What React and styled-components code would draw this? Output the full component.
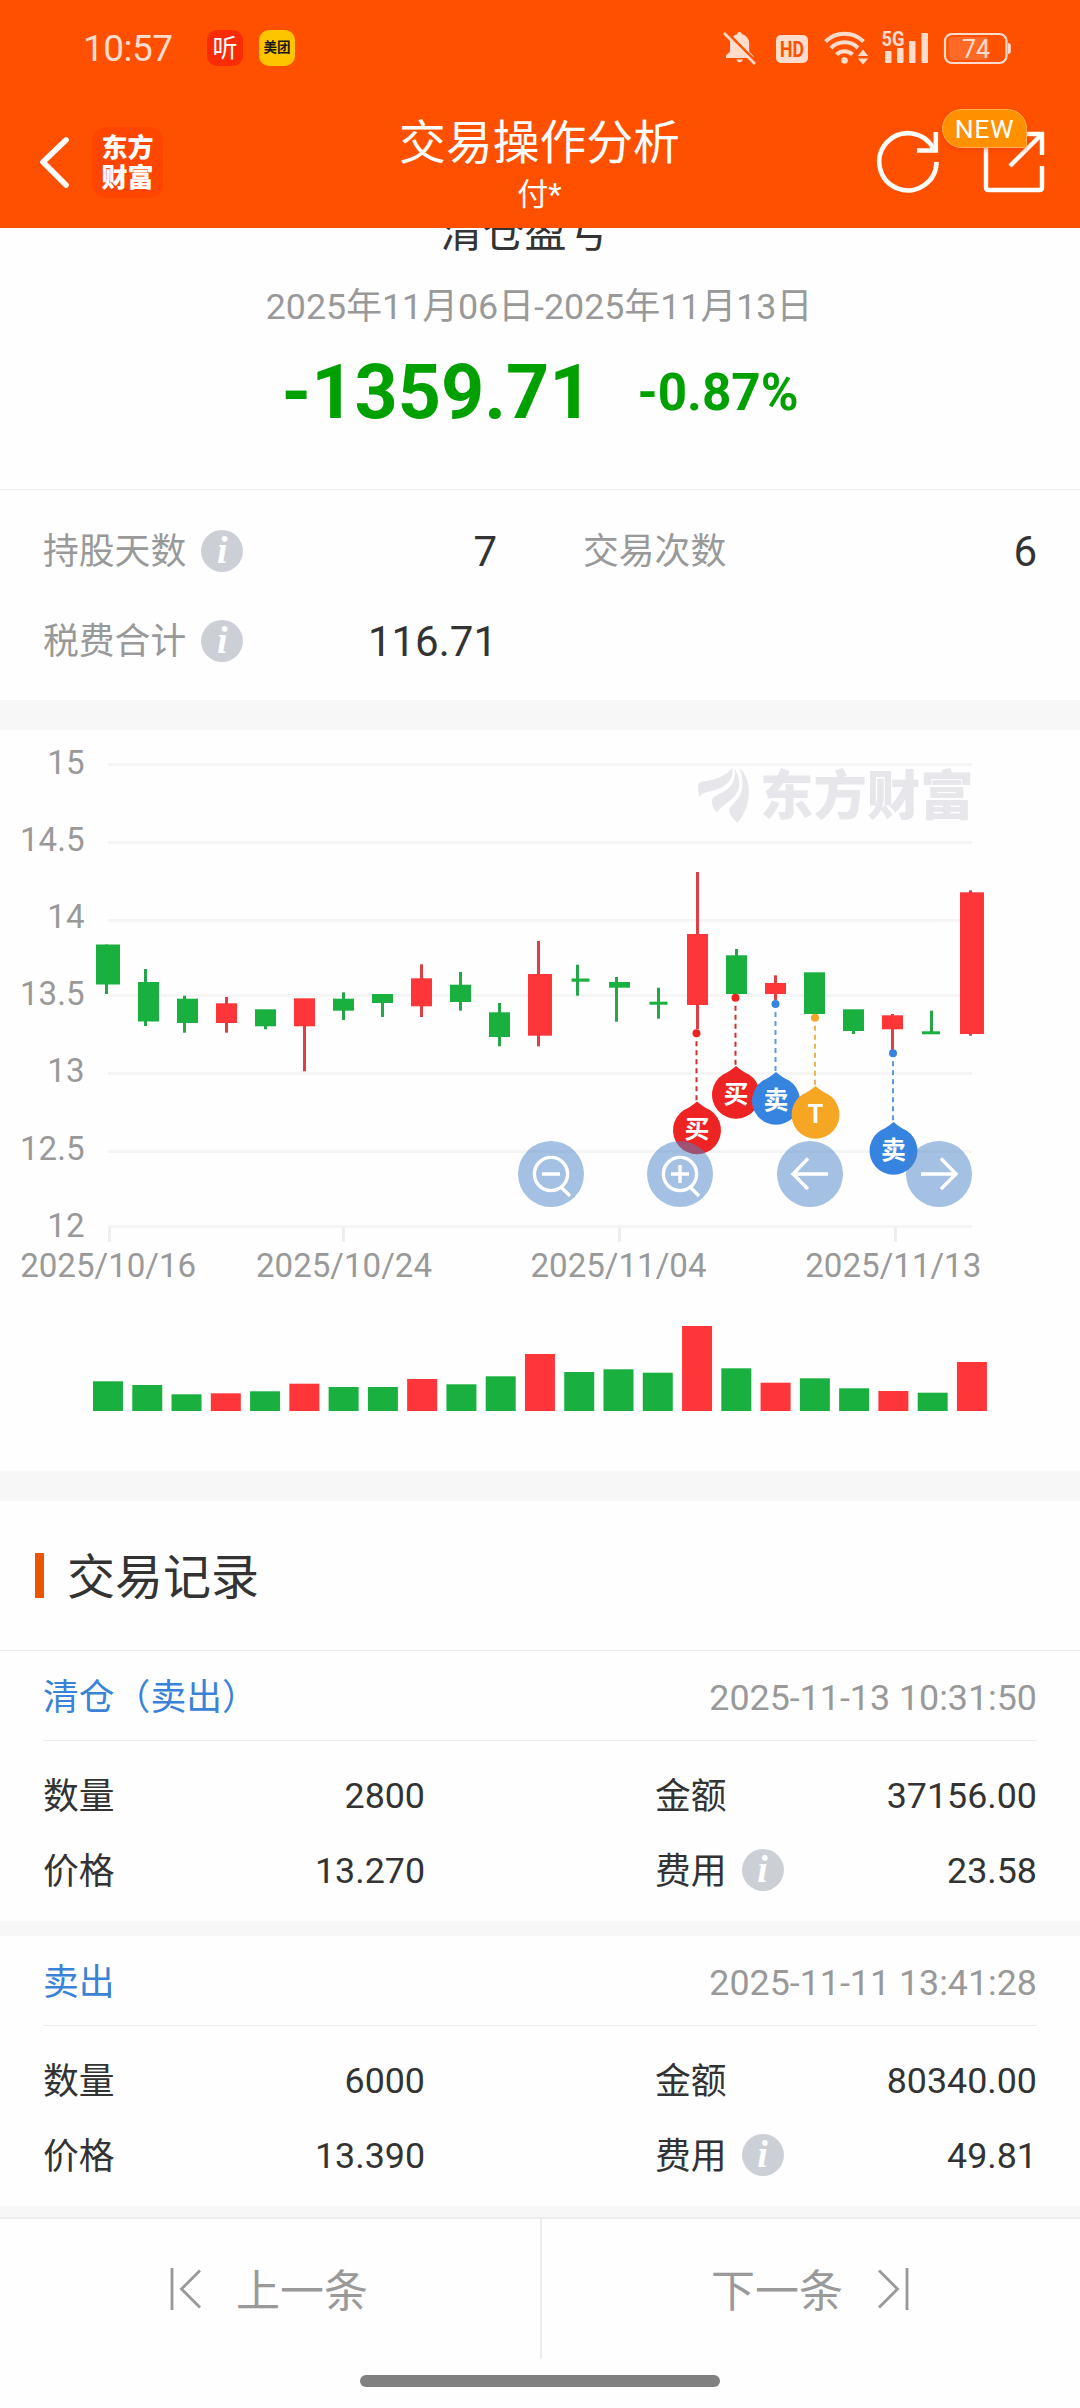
import React from 'react';
import styled, { createGlobalStyle } from 'styled-components';

const GREEN = '#1ab040';
const RED = '#fe3539';

const gridLines = [
  { label: '15', y: 764.5, base: 773.7 },
  { label: '14.5', y: 842.5, base: 850.7 },
  { label: '14', y: 920.5, base: 927.7 },
  { label: '13.5', y: 995.5, base: 1004.7 },
  { label: '13', y: 1073.5, base: 1081.7 },
  { label: '12.5', y: 1151.5, base: 1159.7 },
  { label: '12', y: 1226.5, base: 1236.7 },
];

const ticks = [
  { label: '2025/10/16', x: 108.2, tick: 109.5 },
  { label: '2025/10/24', x: 344, tick: 343.5 },
  { label: '2025/11/04', x: 618.5, tick: 619.5 },
  { label: '2025/11/13', x: 893.3, tick: 895.5 },
];

// [up, x, width, open/close top, open/close bottom, wick x, high, low, volume top]
const candles = [
  [0, 96, 24, 944.5, 984.5, 106.5, 944.5, 994, 1381.3],
  [0, 138, 21, 982, 1021.5, 145.5, 969, 1026, 1385],
  [0, 177, 21, 998.7, 1023, 184.5, 995.7, 1032.7, 1394.3],
  [1, 216, 21, 1003.3, 1023, 226.5, 997, 1032.7, 1393.3],
  [0, 255, 21, 1009.3, 1026.3, 265.5, 1010, 1029.3, 1391.3],
  [1, 294, 21, 998.3, 1026.3, 304.5, 999, 1071.3, 1383.7],
  [0, 333, 21, 998.7, 1010.7, 343.5, 992.3, 1020, 1387],
  [0, 372, 21, 994, 1003, 382.5, 994, 1017, 1387],
  [1, 411, 21, 978.3, 1006.3, 421.5, 964.3, 1017, 1379],
  [0, 450, 21, 984.7, 1002, 460.5, 972, 1010.7, 1384.3],
  [0, 489, 21, 1012.3, 1037, 499.5, 1003, 1046.3, 1376.3],
  [1, 528, 24, 974, 1035.7, 538.5, 941, 1046.3, 1354],
  [0, 571.5, 18, 978.5, 981.7, 577.5, 964.7, 995.7, 1372],
  [0, 609, 21, 982, 987.7, 616.5, 977, 1021.7, 1369.3],
  [0, 649.5, 18, 1001.7, 1004.7, 658.5, 987.7, 1018.7, 1372.7],
  [1, 687, 21, 934, 1005, 697.5, 872, 1029, 1326],
  [0, 726, 21, 955.3, 994, 736.5, 949, 994, 1368.3],
  [1, 765, 21, 983, 994, 775.5, 975.3, 1000, 1382.7],
  [0, 804, 21, 972.3, 1014, 814.5, 973, 1014, 1378.3],
  [0, 843, 21, 1009.3, 1031, 853.5, 1010, 1034, 1388.3],
  [1, 882, 21, 1015.3, 1029.3, 892.5, 1014, 1050, 1391],
  [0, 922, 18, 1031.3, 1034.3, 931.5, 1010.7, 1034, 1392.7],
  [1, 960, 24, 892.3, 1034, 970.5, 890.3, 1035.7, 1362],
];

const pins = [
  { text: '买', color: '#ee2323', line: '#c9302f', x: 697, y: 1128.5, dot: 1033.3 },
  { text: '买', color: '#ee2323', line: '#c9302f', x: 736, y: 1093, dot: 997.7 },
  { text: '卖', color: '#3783e0', line: '#5a9ae4', x: 776, y: 1099, dot: 1004 },
  { text: 'T', color: '#f5a623', line: '#efb350', x: 815.5, y: 1113, dot: 1017.7 },
  { text: '卖', color: '#3783e0', line: '#5a9ae4', x: 893.5, y: 1149, dot: 1053.3 },
];

const records = [
  {
    type: '清仓（卖出）',
    time: '2025-11-13 10:31:50',
    count: '2800',
    amount: '37156.00',
    price: '13.270',
    fee: '23.58',
  },
  {
    type: '卖出',
    time: '2025-11-11 13:41:28',
    count: '6000',
    amount: '80340.00',
    price: '13.390',
    fee: '49.81',
  },
];

const StatusIcons = () => (
  <svg width="290" height="40" viewBox="722 28 290 40" fill="#ffdccb">
    <path d="M739.5 32c1.600 0 2.200 1 2.400 2.200 4.800 1.200 7.300 4.800 7.300 9.300v8l4.300 4.500v2H726v-2.500l4-4v-8c0-4.500 2.700-8 7.200-9.300.2-1.200.7-2.200 2.300-2.200zM736.300 59.500h6.600c-.6 1.800-1.600 2.700-3.300 2.700s-2.700-.9-3.300-2.700z" />
    <path d="M726.500 32L757 63" stroke="#ff5000" strokeWidth="3" />
    <path d="M724 33L755 64" stroke="#ffdccb" strokeWidth="2.600" />
    <rect x="776" y="35" width="32" height="28" rx="5" />
    <text x="792" y="57" textAnchor="middle" fontSize="22" fontWeight="700" fill="#ff5000" textLength="24" lengthAdjust="spacingAndGlyphs">
      HD
    </text>
    <g fill="none" stroke="#ffdccb" strokeWidth="4">
      <path d="M825.500 41.500a27 27 0 0 1 38 0" />
      <path d="M831 48a19 19 0 0 1 27 0" />
      <path d="M836.500 54.500a11.500 11.500 0 0 1 16 0" />
    </g>
    <circle cx="844.500" cy="60.500" r="3.300" />
    <path d="M863 49.500l5.200 6.500h-10.400zM863 64.500l5.200-6h-10.400z" />
    <text x="881.500" y="46" fontSize="20" fontWeight="700" textLength="23" lengthAdjust="spacingAndGlyphs">
      5G
    </text>
    <rect x="885" y="51" width="6.500" height="12" rx="1" />
    <rect x="897" y="48" width="6.500" height="15" rx="1" />
    <rect x="909" y="41" width="6.500" height="22" rx="1" />
    <rect x="921.500" y="33" width="6.500" height="30" rx="1" />
    <rect x="945" y="34" width="61.500" height="29" rx="7" fill="none" stroke="#ffdccb" strokeWidth="2.200" />
    <rect x="948.500" y="37" width="40" height="23" rx="4" fill="#ff6a26" />
    <path d="M1008 43c2 0 2.800 1 2.800 2.500v6c0 1.500-.8 2.500-2.800 2.500z" />
    <text x="976" y="57.500" textAnchor="middle" fontSize="25">
      74
    </text>
  </svg>
);

const BackIcon = () => (
  <svg width="34" height="56" viewBox="37 135 34 56" fill="none">
    <path d="M66 141L43 163L66 186" stroke="#fff" strokeWidth="5.600" strokeLinecap="round" strokeLinejoin="round" />
  </svg>
);

const RefreshIcon = () => (
  <svg width="68" height="68" viewBox="875 128 68 68" fill="none" stroke="#fff" strokeWidth="4.600">
    <path d="M937.500 162A28.600 28.600 0 1 1 934.500 149" />
    <path d="M936.800 132V150.500H918" />
  </svg>
);

const ShareIcon = () => (
  <svg width="68" height="68" viewBox="981 128 68 68" fill="none" stroke="#fff" strokeWidth="4.400">
    <path d="M1004 134H987V187.500Q987 190 989.500 190H1040.500Q1043 190 1043 187.500V166" />
    <path d="M1020 134H1043V155M1043 134L1011 166" />
  </svg>
);

const InfoIcon = () => (
  <Info>
    <i>i</i>
  </Info>
);

const SkipIcon = ({ flip }) => (
  <svg width="32" height="44" viewBox="0 0 32 44" fill="none" stroke="#999" strokeWidth="2.800">
    <g transform={flip ? 'translate(32 0) scale(-1 1)' : undefined}>
      <path d="M2 1V43M30 3.500L11.500 22L30 40.500" />
    </g>
  </svg>
);

const Chart = () => (
  <ChartBox>
    <ChartSvg viewBox="0 730 1080 741">
      {gridLines.map((g) => (
        <g key={g.label}>
          <rect x="108" y={g.y - 1.5} width="864" height="3" fill="#f5f5f5" />
          <text x="84.500" y={g.base} textAnchor="end">
            {g.label}
          </text>
        </g>
      ))}
      {ticks.map((t) => (
        <g key={t.label}>
          <rect x={t.tick - 1.5} y="1227" width="3" height="15" fill="#eee" />
          <text x={t.x} y="1276.700" textAnchor="middle">
            {t.label}
          </text>
        </g>
      ))}
      <g fill="#e6e6eb">
        <path d="M698 786Q698 782 703 781.500Q722 780 732.500 768Q734 779 724 786Q717 790 707 792Q702 793 699 797Z" />
        <path d="M734.500 768Q744 785 734 797Q724 805 716.500 812Q711 806 712 799Q713 797 719 794Q738 786 734.500 768Z" />
        <path d="M739.500 768Q749 777 749 792Q749 809 737.500 823Q729 815 729 809Q730 807 734 803Q748 790 739.500 768Z" />
        <Watermark x="760" y="814.500">
          东方财富
        </Watermark>
      </g>
      {candles.map(([up, x, w, top, bottom, wick, high, low, vol], i) => (
        <g key={i} fill={up ? RED : GREEN}>
          <rect x={wick - 1.5} y={high} width="3" height={low - high} fill={up ? '#dc4044' : '#27a549'} />
          <rect x={x} y={top} width={w} height={bottom - top} />
          <rect x={93 + i * 39.27} y={vol} width="30" height={1411 - vol} />
        </g>
      ))}
      {pins.map((p, i) => (
        <g key={i} fill={p.color}>
          <path d={`M${p.x - 0.5} ${p.dot + 8}V${p.y - 26}`} stroke={p.line} strokeWidth="2" strokeDasharray="5 4" />
          <circle cx={p.x - 0.5} cy={p.dot} r="4" />
        </g>
      ))}
      {pins.map((p, i) => (
        <g key={i} fill={p.color}>
          <path
            d={`M${p.x} ${p.y - 27}q7 6 13 8.500a24 24 0 1 1 -26 0q6 -2.500 13 -8.500z`}
          />
          <PinText x={p.x} y={p.y + 9.5}>
            {p.text}
          </PinText>
        </g>
      ))}
    </ChartSvg>
    <Controls>
      <RoundButton>
        <svg viewBox="0 0 66 66">
          <circle cx="33" cy="33" r="16.600" />
          <path d="M24 33H42M43.500 46.500L52 55" />
        </svg>
      </RoundButton>
      <RoundButton>
        <svg viewBox="0 0 66 66">
          <circle cx="33" cy="33" r="16.600" />
          <path d="M24 33H42M33 24V42M43.500 46.500L52 55" />
        </svg>
      </RoundButton>
      <RoundButton>
        <svg viewBox="0 0 66 66">
          <path d="M51 33H16M31 17.500L16 33L31 48" />
        </svg>
      </RoundButton>
      <RoundButton>
        <svg viewBox="0 0 66 66">
          <path d="M15 33H50M35 17.500L50 33L35 48" />
        </svg>
      </RoundButton>
    </Controls>
  </ChartBox>
);

const Record = ({ item }) => (
  <RecordBox>
    <RecordHead>
      <RecordType>{item.type}</RecordType>
      <time>{item.time}</time>
    </RecordHead>
    <RecordGrid>
      <Field>
        <span>数量</span>
        <b>{item.count}</b>
      </Field>
      <Field>
        <span>金额</span>
        <b>{item.amount}</b>
      </Field>
      <Field>
        <span>价格</span>
        <b>{item.price}</b>
      </Field>
      <Field>
        <span>费用</span>
        <InfoIcon />
        <b>{item.fee}</b>
      </Field>
    </RecordGrid>
  </RecordBox>
);

const App = () => {
  return (
    <Screen>
      <GlobalStyle />
      <Header>
        <StatusBar>
          <Clock>10:57</Clock>
          <AppBadge $bg="#fa2c06" $color="#fff" $size={25}>
            听
          </AppBadge>
          <AppBadge $bg="#fdc400" $color="#1c1a10" $size={13.5}>
            美团
          </AppBadge>
          <StatusRight>
            <StatusIcons />
          </StatusRight>
        </StatusBar>
        <NavBar>
          <NavLeft>
            <BackIcon />
            <Logo>
              <span>东方</span>
              <span>财富</span>
            </Logo>
          </NavLeft>
          <NavTitle>
            <h1>交易操作分析</h1>
            <p>付*</p>
          </NavTitle>
          <NavRight>
            <RefreshIcon />
            <ShareWrap>
              <ShareIcon />
              <NewBadge>NEW</NewBadge>
            </ShareWrap>
          </NavRight>
        </NavBar>
      </Header>

      <Content>
        <Summary>
          <SummaryTitle>清仓盈亏</SummaryTitle>
          <Period>2025年11月06日-2025年11月13日</Period>
          <Profit>
            <strong>-1359.71</strong>
            <em>-0.87%</em>
          </Profit>
        </Summary>
        <Stats>
          <Stat>
            <span>持股天数</span>
            <InfoIcon />
            <b>7</b>
          </Stat>
          <Stat>
            <span>交易次数</span>
            <b>6</b>
          </Stat>
          <Stat>
            <span>税费合计</span>
            <InfoIcon />
            <b>116.71</b>
          </Stat>
        </Stats>
        <Gap $h={30} />
        <Chart />
        <Gap $h={30} />
        <SectionTitle>
          <span>交易记录</span>
        </SectionTitle>
        {records.map((item) => (
          <React.Fragment key={item.time}>
            <Record item={item} />
            <Gap $h={15} />
          </React.Fragment>
        ))}
      </Content>

      <Footer>
        <Pager>
          <PageButton>
            <SkipIcon />
            <span>上一条</span>
          </PageButton>
          <PageButton>
            <span>下一条</span>
            <SkipIcon flip />
          </PageButton>
        </Pager>
        <HomeBar />
      </Footer>
    </Screen>
  );
};

const GlobalStyle = createGlobalStyle`
  * {
    box-sizing: border-box;
    margin: 0;
    padding: 0;
  }

  body {
    font-family: Roboto, 'Noto Sans CJK SC', sans-serif;
    line-height: 1.2;
    color: #333;
    background: #fefefe;
  }

  button {
    border: 0;
    background: none;
    font: inherit;
  }

  svg {
    display: block;
    flex: none;
  }
`;

const Screen = styled.div`
  display: flex;
  flex-direction: column;
  width: 1080px;
  height: 2408px;
  overflow: hidden;
`;

const Header = styled.header`
  flex: none;
  height: 228px;
  color: #fff;
  background: #ff5000;
`;

const StatusBar = styled.div`
  display: flex;
  align-items: center;
  height: 96px;
  padding: 0 68px 0 83px;
`;

const Clock = styled.span`
  width: 124px;
  padding-top: 2px;
  font-size: 37px;
  letter-spacing: -0.5px;
  color: #ffdccb;
`;

const AppBadge = styled.span`
  display: flex;
  align-items: center;
  justify-content: center;
  width: 36px;
  height: 36px;
  margin-right: 16px;
  border-radius: 10px;
  font-size: ${({ $size }) => $size}px;
  font-weight: ${({ $size }) => ($size < 20 ? 700 : 400)};
  line-height: 1;
  color: ${({ $color }) => $color};
  background: ${({ $bg }) => $bg};
`;

const StatusRight = styled.div`
  margin-left: auto;
`;

const NavBar = styled.div`
  display: grid;
  grid-template-columns: 1fr auto 1fr;
  align-items: center;
  height: 132px;
  padding: 0 32px 0 37px;
`;

const NavLeft = styled.div`
  display: flex;
  align-items: center;
  gap: 21px;
`;

const Logo = styled.div`
  display: flex;
  flex-direction: column;
  align-items: center;
  justify-content: center;
  width: 71px;
  height: 71px;
  padding-top: 2px;
  border-radius: 14px;
  font-size: 26px;
  font-weight: 900;
  line-height: 30px;
  background: #ff4600;
`;

const NavTitle = styled.div`
  padding-top: 10px;
  text-align: center;
  transform: translateX(-3px);

  h1 {
    font-size: 46.8px;
    font-weight: 400;
    line-height: 55px;
  }

  p {
    font-size: 31px;
    line-height: 47px;
  }
`;

const NavRight = styled.div`
  display: flex;
  align-items: center;
  justify-content: flex-end;
  gap: 38px;
`;

const ShareWrap = styled.div`
  position: relative;
`;

const NewBadge = styled.span`
  position: absolute;
  left: -38px;
  top: -19px;
  width: 85px;
  height: 39px;
  border: 1px solid #ffb052;
  border-radius: 20px 20px 2px 20px;
  font-size: 26.5px;
  letter-spacing: 0.6px;
  line-height: 38px;
  text-align: center;
  background: #ff9000;
  box-shadow: 0 2px 5px rgba(220, 50, 0, 0.4);
`;

const Content = styled.main`
  flex: 1;
  min-height: 0;
  overflow: hidden;
`;

const Summary = styled.section`
  display: flow-root;
  height: 262px;
  border-bottom: 1px solid #ebebeb;
  text-align: center;
`;

const SummaryTitle = styled.h2`
  margin-top: -20px;
  padding-right: 31px;
  font-size: 42px;
  font-weight: 400;
  line-height: 50px;
`;

const Period = styled.p`
  padding-right: 2px;
  font-size: 35.8px;
  line-height: 98px;
  color: #999;
`;

const Profit = styled.div`
  display: flex;
  align-items: center;
  justify-content: center;
  gap: 45px;
  height: 73px;
  color: #00a000;

  strong {
    font-size: 75.4px;
    font-weight: 700;
  }

  em {
    font-size: 51.2px;
    font-style: normal;
    font-weight: 700;
  }
`;

const Stats = styled.section`
  display: grid;
  grid-template-columns: 454px 454px;
  grid-auto-rows: 90px;
  column-gap: 86px;
  height: 210px;
  padding: 16px 43px 14px;
`;

const Stat = styled.div`
  display: flex;
  align-items: center;
  font-size: 35.8px;
  color: #999;

  span {
    padding-top: 3px;
  }

  b {
    margin-left: auto;
    padding-top: 3px;
    font-size: 42px;
    font-weight: 400;
    color: #333;
  }
`;

const Info = styled.i`
  width: 42px;
  height: 42px;
  margin-left: 15px;
  border-radius: 50%;
  font-style: normal;
  text-align: center;
  background: #ccd0d6;

  i {
    display: block;
    font-family: 'Liberation Serif', serif;
    font-size: 38px;
    font-style: italic;
    font-weight: 700;
    line-height: 40px;
    color: #fff;
  }
`;

const Gap = styled.div`
  height: ${({ $h }) => $h}px;
  background: #f7f7f7;
`;

const ChartBox = styled.section`
  position: relative;
  height: 741px;
`;

const ChartSvg = styled.svg`
  width: 1080px;
  height: 741px;
  font-size: 33.1px;
  fill: #999;
`;

const Watermark = styled.text`
  font-size: 53.4px;
  font-weight: 900;
`;

const PinText = styled.text`
  font-size: 25px;
  font-weight: 700;
  text-anchor: middle;
  fill: #fff;
`;

const Controls = styled.div`
  position: absolute;
  top: 411px;
  left: 518px;
  display: flex;
  justify-content: space-between;
  width: 454px;
`;

const RoundButton = styled.button`
  width: 66px;
  height: 66px;
  border-radius: 50%;
  background: rgba(74, 131, 199, 0.5);

  svg {
    fill: none;
    stroke: #fff;
    stroke-width: 3.4;
  }
`;

const SectionTitle = styled.h2`
  display: flex;
  align-items: center;
  height: 150px;
  padding-left: 35px;
  border-bottom: 1px solid #ebebeb;
  font-size: 48px;
  font-weight: 400;

  &::before {
    content: '';
    width: 9px;
    height: 45px;
    margin-right: 23px;
    background: #eb5500;
  }

  span {
    padding-top: 5px;
  }
`;

const RecordBox = styled.article`
  padding: 0 43px;
`;

const RecordHead = styled.div`
  display: flex;
  align-items: center;
  justify-content: space-between;
  height: 90px;
  padding-top: 5px;
  border-bottom: 1px solid #ebebeb;
  font-size: 35.8px;
  color: #999;
`;

const RecordType = styled.span`
  padding-top: 1px;
  color: #3a82d8;
`;

const RecordGrid = styled.div`
  display: grid;
  grid-template-columns: 382px 382px;
  grid-auto-rows: 75px;
  column-gap: 230px;
  height: 180px;
  padding-top: 16px;
`;

const Field = styled.div`
  display: flex;
  align-items: center;
  font-size: 35.8px;

  span {
    padding-top: 5px;
  }

  b {
    margin-left: auto;
    padding-top: 4px;
    font-weight: 400;
  }
`;

const Footer = styled.footer`
  flex: none;
  height: 191px;
  border-top: 2px solid #ededed;
`;

const Pager = styled.nav`
  display: grid;
  grid-template-columns: 1fr 1fr;
`;

const PageButton = styled.button`
  display: flex;
  align-items: center;
  justify-content: center;
  gap: 34px;
  height: 140px;
  padding-right: 2px;
  font-size: 44px;
  color: #999;

  span {
    padding-top: 6px;
  }

  & + & {
    border-left: 2px solid #ededed;
  }
`;

const HomeBar = styled.div`
  width: 360px;
  height: 12px;
  margin: 16px auto 0;
  border-radius: 6px;
  background: #808080;
`;

export default App;
